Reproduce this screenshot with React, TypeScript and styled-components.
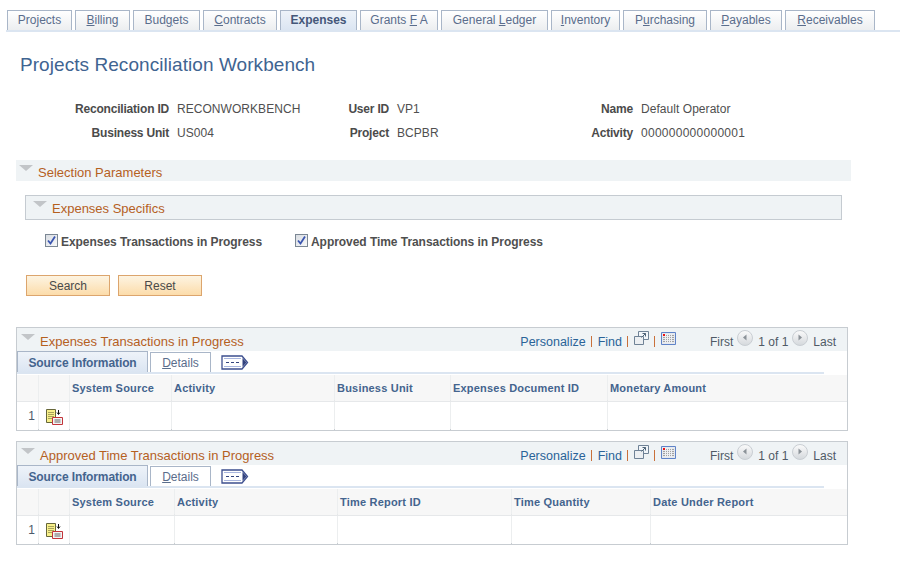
import styled, { createGlobalStyle } from "styled-components";

const GlobalStyle = createGlobalStyle`
  html, body {
    margin: 0;
    padding: 0;
    background: #fff;
    font-family: "Liberation Sans", Arial, sans-serif;
    font-size: 12px;
    color: #4f4f4f;
  }
`;

const TabIcon = () => (
  <svg width="28" height="15" viewBox="0 0 28 15">
    <path d="M1 1H21L26.500 7.500L21 14H1Z" fill="#fff" stroke="#3d4f8f" strokeWidth="1.300" />
    <path d="M21.500 3L25.500 7.500L21.500 12Z" fill="#33437f" />
    <path d="M3 3.500H20M3 11.500H20" stroke="#a9b6de" />
    <path d="M5 7H8V8H5ZM10 7H13V8H10ZM15 7H18V8H15Z" fill="#33457f" />
  </svg>
);

const RowIcon = () => (
  <svg width="17" height="16" viewBox="0 0 17 16">
    <path d="M0.500 0.500H9.500V13.500H0.500Z" fill="#f8f08a" stroke="#66663a" />
    <path d="M2 3.500H8M2 5.500H8M2 7.500H8M2 9.500H6" stroke="#a8a35c" />
    <path d="M12.500 1V5M11 3.500L12.500 5.500L14 3.500" stroke="#111" fill="none" />
    <path d="M6.500 8.500H16.500V15.500H6.500Z" fill="#f4f4f4" stroke="#c2343a" />
    <path d="M8.500 11H14.500M8.500 13H14.500" stroke="#666" />
  </svg>
);

const ViewAllIcon = () => (
  <svg width="15" height="14" viewBox="0 0 15 14">
    <path d="M4.500 0.500H14.500V8.500H4.500Z" fill="#f2f6fa" stroke="#6f8296" />
    <path d="M0.500 5.500H9.500V13.500H0.500Z" fill="#eceff2" stroke="#6f8296" />
    <path d="M7.500 6.500L11.500 2.500M8.500 2.500H11.500V5.500" stroke="#4e6478" fill="none" />
  </svg>
);

const CalendarIcon = () => (
  <svg width="15" height="13" viewBox="0 0 15 13">
    <path d="M0.500 0.500H14.500V12.500H0.500Z" fill="#e6e9ee" stroke="#5f83c8" />
    <path d="M2 3.500H13M2 5.500H13M2 7.500H13M2 9.500H13" stroke="#a2a2a2" />
    <path d="M4.500 2V11M6.500 2V11M8.500 2V11M10.500 2V11" stroke="#eef0f3" />
    <path d="M2 2H4V4H2Z" fill="#ee1111" />
  </svg>
);

const NavIcon = ({ dir, id }: { dir: "left" | "right"; id: string }) => (
  <svg width="16" height="16" viewBox="0 0 16 16">
    <defs>
      <linearGradient id={id} x1="0" y1="0" x2="0" y2="1">
        <stop offset="0" stopColor="#fbfbfb" />
        <stop offset="1" stopColor="#d4d8dc" />
      </linearGradient>
    </defs>
    <circle cx="8" cy="8" r="7.500" fill={`url(#${id})`} stroke="#c9ced3" />
    {dir === "left" ? (
      <path d="M9.500 4.500V10.500L6 7.500Z" fill="#8b9298" />
    ) : (
      <path d="M6.500 4.500V10.500L10 7.500Z" fill="#8b9298" />
    )}
  </svg>
);

const CheckMark = () => (
  <svg width="11" height="11" viewBox="0 0 11 11">
    <path d="M2 5.500L4.500 8.500L9 1.500" fill="none" stroke="#3a55b0" strokeWidth="1.800" />
  </svg>
);

const Page = styled.div`
  width: 912px;
  height: 563px;
  overflow: hidden;
`;

const TabBar = styled.div`
  display: flex;
  gap: 3px;
  margin: 10px 12px 0 6px;
  padding-left: 1px;
  border-bottom: 2px solid #dbe5f1;
`;

const Tab = styled.div<{ $w: number; $active?: boolean }>`
  box-sizing: border-box;
  width: ${(p) => p.$w}px;
  height: 20px;
  border: 1px solid #a9b6c8;
  border-bottom: none;
  background: ${(p) =>
    p.$active
      ? "linear-gradient(#eef3f9, #dbe5f2)"
      : "linear-gradient(#ffffff, #eceef0)"};
  color: ${(p) => (p.$active ? "#44577a" : "#5a6d8c")};
  font-weight: ${(p) => (p.$active ? "bold" : "normal")};
  line-height: 19px;
  text-align: center;
  white-space: nowrap;

  u {
    text-underline-offset: 1px;
  }
`;

const Title = styled.h1`
  margin: 21px 0 0 20px;
  font-size: 19px;
  font-weight: normal;
  letter-spacing: 0.060px;
  line-height: 24px;
  color: #3f6491;
`;

const InfoGrid = styled.div`
  display: grid;
  grid-template-columns: 153px 132px 72px 164px 64px auto;
  grid-auto-rows: 24px;
  column-gap: 8px;
  margin: 23px 0 0 16px;
  line-height: 18px;
`;

const InfoLabel = styled.div`
  text-align: right;
  font-weight: bold;
  letter-spacing: -0.200px;
  white-space: nowrap;
  color: #4b4b4b;
`;

const InfoValue = styled.div<{ $digits?: boolean }>`
  letter-spacing: ${(p) => (p.$digits ? "0.270px" : "0.050px")};
  white-space: nowrap;
`;

const Triangle = styled.span`
  display: block;
  flex: none;
  width: 0;
  height: 0;
  border-left: 7px solid transparent;
  border-right: 7px solid transparent;
  border-top: 6px solid #c2c5c8;
`;

const SectionBar = styled.div`
  display: flex;
  align-items: flex-start;
  gap: 5px;
  box-sizing: border-box;
  width: 835px;
  height: 21px;
  margin: 12px 0 0 16px;
  padding-left: 3px;
  background: #eff3f5;
  color: #b5601f;
  font-size: 13px;
  line-height: 26px;

  ${Triangle} {
    margin-top: 5px;
  }
`;

const SubSectionBar = styled(SectionBar)`
  width: 817px;
  height: 25px;
  margin: 14px 0 0 25px;
  padding-left: 7px;
  border: 1px solid #c5cbd1;
`;

const CheckRow = styled.div`
  display: flex;
  margin: 14px 0 0 45px;
  height: 16px;
`;

const CheckItem = styled.label<{ $w: number }>`
  display: flex;
  align-items: flex-start;
  gap: 3px;
  width: ${(p) => p.$w}px;
  font-weight: bold;
  letter-spacing: -0.050px;
  line-height: 17px;
  white-space: nowrap;
`;

const CheckBox = styled.span`
  display: flex;
  align-items: center;
  justify-content: center;
  box-sizing: border-box;
  width: 13px;
  height: 13px;
  border: 1px solid #7b8794;
  background: linear-gradient(135deg, #d9dde2, #f7f8fa);
`;

const ButtonRow = styled.div`
  display: flex;
  gap: 8px;
  margin: 25px 0 0 26px;
`;

const Button = styled.div`
  box-sizing: border-box;
  width: 84px;
  height: 21px;
  border: 1px solid #dca56d;
  background: linear-gradient(#fdf4e2, #fcdcaa);
  color: #4a4a4a;
  text-align: center;
  line-height: 21px;
`;

const GridBox = styled.section<{ $top: number }>`
  box-sizing: border-box;
  width: 832px;
  height: 104px;
  margin: ${(p) => p.$top}px 0 0 16px;
  border-top: 1px solid #c7ccd1;
  border-left: 1px solid #c7ccd1;
  border-right: 1px solid #c7ccd1;
  border-bottom: 2px solid #c7ccd1;
`;

const GridHeader = styled.div`
  display: flex;
  align-items: flex-start;
  height: 23px;
  padding: 0 11px 0 4px;
  background: #eff3f5;
  white-space: nowrap;

  ${Triangle} {
    margin-top: 6px;
  }
`;

const GridTitle = styled.div`
  flex: 1;
  margin-left: 5px;
  color: #b5601f;
  font-size: 13px;
  line-height: 28px;
`;

const HeaderLink = styled.span`
  color: #2a6398;
  font-size: 12.500px;
  line-height: 28px;
`;

const Pipe = styled.span`
  width: 1px;
  height: 11px;
  margin: 8px 6px 0 5px;
  background: #c9703a;
`;

const SmallIcon = styled.span<{ $top: number }>`
  display: block;
  height: 14px;
  margin-top: ${(p) => p.$top}px;
`;

const NavText = styled.span<{ $ml?: number }>`
  margin-left: ${(p) => p.$ml ?? 0}px;
  line-height: 28px;
  color: #4f5a66;
`;

const NavButton = styled.span`
  display: block;
  height: 16px;
  margin: 2px 5px 0 4px;
`;

const GridTabs = styled.div`
  display: flex;
  align-items: flex-end;
  gap: 2px;
  box-sizing: border-box;
  width: 807px;
  height: 23px;
  margin-bottom: 1px;
  border-bottom: 2px solid #dbe5f1;
`;

const GridTab = styled.div<{ $w: number; $active?: boolean }>`
  box-sizing: border-box;
  width: ${(p) => p.$w}px;
  height: ${(p) => (p.$active ? 21 : 20)}px;
  border: 1px solid #a9b6c8;
  border-bottom: none;
  background: ${(p) => (p.$active ? "linear-gradient(#eef3f9, #dbe5f2)" : "#fff")};
  color: ${(p) => (p.$active ? "#44648e" : "#5a6d8c")};
  font-weight: ${(p) => (p.$active ? "bold" : "normal")};
  letter-spacing: ${(p) => (p.$active ? "-0.100px" : "0")};
  text-align: center;
  line-height: ${(p) => (p.$active ? 22 : 20)}px;
`;

const GridTabIcon = styled.span`
  display: block;
  height: 15px;
  margin: 0 0 2px 8px;
`;

const Cols = styled.div<{ $cols: string }>`
  display: grid;
  grid-template-columns: ${(p) => p.$cols};
  column-gap: 1px;
  background: #eceeef;
`;

const HeadRow = styled(Cols)`
  box-sizing: border-box;
  height: 27px;
  border-bottom: 2px solid #e6e8ea;
`;

const BodyRow = styled(Cols)`
  height: 27px;
`;

const HeadCell = styled.div`
  padding-left: 2px;
  background: #f7f7f7;
  color: #44648e;
  font-size: 11px;
  font-weight: bold;
  letter-spacing: 0.200px;
  line-height: 26px;
  white-space: nowrap;
`;

const BodyCell = styled.div`
  background: #fff;
`;

const RowNum = styled(BodyCell)`
  padding-right: 3px;
  text-align: right;
  line-height: 28px;
  color: #4b5a6b;
`;

const IconCell = styled(BodyCell)`
  padding: 7px 0 0 7px;
`;

const infoRows = [
  ["Reconciliation ID", "RECONWORKBENCH", "User ID", "VP1", "Name", "Default Operator"],
  ["Business Unit", "US004", "Project", "BCPBR", "Activity", "000000000000001"],
];

const tabs: { w: number; before?: string; key?: string; after?: string; active?: boolean }[] = [
  { w: 65, before: "Pro", key: "j", after: "ects" },
  { w: 55, key: "B", after: "illing" },
  { w: 67, before: "Bud", key: "g", after: "ets" },
  { w: 74, key: "C", after: "ontracts" },
  { w: 77, before: "Expenses", active: true },
  { w: 78, before: "Grants ", key: "F", after: " A" },
  { w: 107, before: "General ", key: "L", after: "edger" },
  { w: 69, key: "I", after: "nventory" },
  { w: 84, before: "P", key: "u", after: "rchasing" },
  { w: 72, key: "P", after: "ayables" },
  { w: 90, key: "R", after: "eceivables" },
];

type GridProps = {
  id: string;
  top: number;
  title: string;
  cols: string;
  heads: string[];
};

const DataGrid = ({ id, top, title, cols, heads }: GridProps) => (
  <GridBox $top={top}>
    <GridHeader>
      <Triangle />
      <GridTitle>{title}</GridTitle>
      <HeaderLink>Personalize</HeaderLink>
      <Pipe />
      <HeaderLink>Find</HeaderLink>
      <Pipe />
      <SmallIcon $top={3}>
        <ViewAllIcon />
      </SmallIcon>
      <Pipe />
      <SmallIcon $top={4}>
        <CalendarIcon />
      </SmallIcon>
      <NavText $ml={34}>First</NavText>
      <NavButton>
        <NavIcon dir="left" id={`${id}-prev`} />
      </NavButton>
      <NavText>1 of 1</NavText>
      <NavButton>
        <NavIcon dir="right" id={`${id}-next`} />
      </NavButton>
      <NavText>Last</NavText>
    </GridHeader>
    <GridTabs>
      <GridTab $w={131} $active>
        Source Information
      </GridTab>
      <GridTab $w={61}>
        <u>D</u>etails
      </GridTab>
      <GridTabIcon>
        <TabIcon />
      </GridTabIcon>
    </GridTabs>
    <HeadRow $cols={cols}>
      <HeadCell />
      <HeadCell />
      {heads.map((h) => (
        <HeadCell key={h}>{h}</HeadCell>
      ))}
    </HeadRow>
    <BodyRow $cols={cols}>
      <RowNum>1</RowNum>
      <IconCell>
        <RowIcon />
      </IconCell>
      {heads.map((h) => (
        <BodyCell key={h} />
      ))}
    </BodyRow>
  </GridBox>
);

export default function App() {
  return (
    <Page>
      <GlobalStyle />
      <TabBar>
        {tabs.map((t, i) => (
          <Tab key={i} $w={t.w} $active={t.active}>
            {t.before}
            {t.key && <u>{t.key}</u>}
            {t.after}
          </Tab>
        ))}
      </TabBar>
      <Title>Projects Reconciliation Workbench</Title>
      <InfoGrid>
        {infoRows.flat().map((text, i) =>
          i % 2 === 0 ? (
            <InfoLabel key={text}>{text}</InfoLabel>
          ) : (
            <InfoValue key={text} $digits={/^\d+$/.test(text)}>
              {text}
            </InfoValue>
          )
        )}
      </InfoGrid>
      <SectionBar>
        <Triangle />
        Selection Parameters
      </SectionBar>
      <SubSectionBar>
        <Triangle />
        Expenses Specifics
      </SubSectionBar>
      <CheckRow>
        <CheckItem $w={250}>
          <CheckBox>
            <CheckMark />
          </CheckBox>
          Expenses Transactions in Progress
        </CheckItem>
        <CheckItem $w={260}>
          <CheckBox>
            <CheckMark />
          </CheckBox>
          Approved Time Transactions in Progress
        </CheckItem>
      </CheckRow>
      <ButtonRow>
        <Button>Search</Button>
        <Button>Reset</Button>
      </ButtonRow>
      <DataGrid
        id="expenses"
        top={31}
        title="Expenses Transactions in Progress"
        cols="21px 30px 101px 162px 115px 156px 1fr"
        heads={["System Source", "Activity", "Business Unit", "Expenses Document ID", "Monetary Amount"]}
      />
      <DataGrid
        id="time"
        top={10}
        title="Approved Time Transactions in Progress"
        cols="21px 30px 104px 162px 173px 138px 1fr"
        heads={["System Source", "Activity", "Time Report ID", "Time Quantity", "Date Under Report"]}
      />
    </Page>
  );
}
